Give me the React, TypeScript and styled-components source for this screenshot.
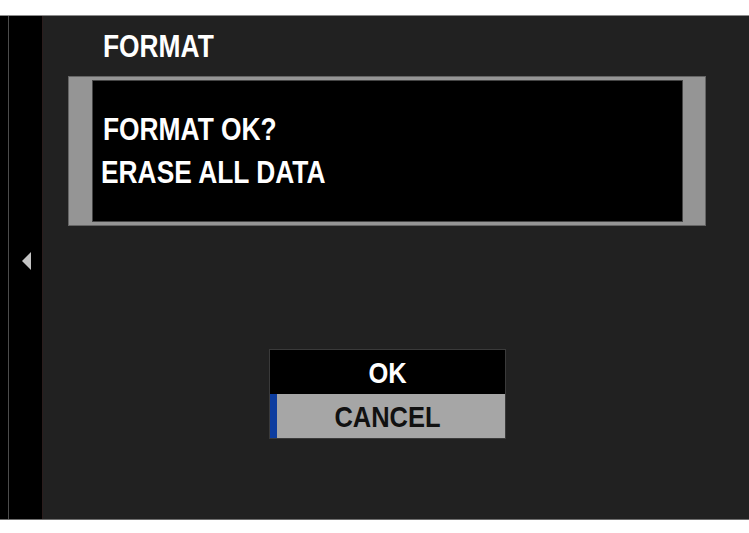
import React from "react";
import styled, { createGlobalStyle } from "styled-components";

const Global = createGlobalStyle`
  html, body { margin: 0; padding: 0; background: #ffffff; }
  body { font-family: "Liberation Sans", Arial, sans-serif; }
`;

const Page = styled.div`
  width: 749px;
  height: 533px;
  padding-top: 15px;
  box-sizing: border-box;
  background: #ffffff;
`;

const Screen = styled.div`
  display: flex;
  height: 505px;
  border-top: 1px solid #8c8c8c;
  border-bottom: 1px solid #6e6e6e;
  box-sizing: border-box;
  background: #212121;
`;

const Sidebar = styled.div`
  width: 43px;
  padding-left: 8px;
  box-sizing: border-box;
  background: #000000;
  border-right: 1px solid #2b1d1d;
  display: flex;
`;

const Rail = styled.div`
  flex: 1;
  border-left: 1px solid #4c4c4c;
  display: flex;
  align-items: center;
  padding-left: 13px;
  padding-bottom: 13px;
`;

const ArrowLeft = styled.div`
  width: 0;
  height: 0;
  border-top: 9.5px solid transparent;
  border-bottom: 9.5px solid transparent;
  border-right: 9px solid #c4c4c4;
`;

const Main = styled.div`
  flex: 1;
  display: flex;
  flex-direction: column;
  padding: 15px 0 0 25px;
`;

/* condensed bold lettering, like the camera's narrow UI font */
const Narrow = styled.span<{ $origin?: string }>`
  display: inline-block;
  transform: scaleX(0.85);
  transform-origin: ${(p) => p.$origin ?? "left"} center;
  white-space: nowrap;
`;

const Title = styled.div`
  font-size: 31px;
  line-height: 31px;
  font-weight: 700;
  color: #ffffff;
  margin-left: 35px;
`;

const Dialog = styled.div`
  margin-top: 14px;
  width: 638px;
  height: 150px;
  box-sizing: border-box;
  background: #959595;
  border: 1px solid #656565;
  padding: 3px 22px 3px 23px;
  display: flex;
`;

const DialogBody = styled.div`
  flex: 1;
  background: #000000;
  border: 1px solid #454545;
  padding: 33px 0 0 8px;
  display: flex;
  flex-direction: column;
  gap: 12px;
`;

const Line = styled.div<{ $indent?: number }>`
  font-size: 31px;
  line-height: 31px;
  font-weight: 700;
  color: #ffffff;
  margin-left: ${(p) => p.$indent ?? 0}px;
`;

const Choices = styled.div`
  margin-top: 123px;
  margin-left: 201px;
  width: 237px;
  display: flex;
  flex-direction: column;
  border: 1px solid #3a3a3a;
  box-sizing: border-box;
`;

const Choice = styled.div<{ $selected?: boolean }>`
  height: 44px;
  box-sizing: border-box;
  padding-top: 3px;
  text-align: center;
  font-size: 30px;
  line-height: 40px;
  font-weight: 700;
  background: ${(p) => (p.$selected ? "#a6a6a6" : "#000000")};
  color: ${(p) => (p.$selected ? "#111111" : "#ffffff")};
  border-left: ${(p) => (p.$selected ? "7px solid #0d3d9f" : "none")};
  padding-right: ${(p) => (p.$selected ? "7px" : "0")};
`;

export default function App() {
  return (
    <>
      <Global />
      <Page>
        <Screen>
          <Sidebar>
            <Rail>
              <ArrowLeft />
            </Rail>
          </Sidebar>
          <Main>
            <Title>
              <Narrow>FORMAT</Narrow>
            </Title>
            <Dialog>
              <DialogBody>
                <Line $indent={2}>
                  <Narrow>FORMAT OK?</Narrow>
                </Line>
                <Line>
                  <Narrow>ERASE ALL DATA</Narrow>
                </Line>
              </DialogBody>
            </Dialog>
            <Choices>
              <Choice>
                <Narrow $origin="center">OK</Narrow>
              </Choice>
              <Choice $selected>
                <Narrow $origin="center">CANCEL</Narrow>
              </Choice>
            </Choices>
          </Main>
        </Screen>
      </Page>
    </>
  );
}
